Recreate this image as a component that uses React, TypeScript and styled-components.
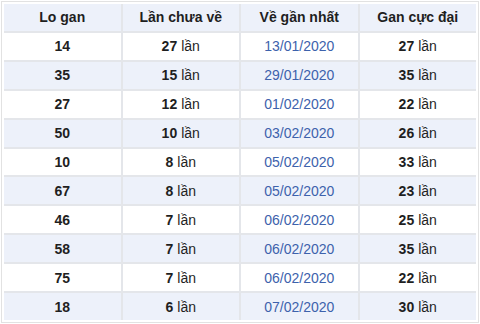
import React from "react";
import styled, { createGlobalStyle } from "styled-components";

const GlobalStyle = createGlobalStyle`
  html, body {
    margin: 0;
    padding: 0;
    background: #ffffff;
  }
  body {
    font-family: "Liberation Sans", Arial, sans-serif;
  }
`;

const Frame = styled.div`
  width: 478px;
  height: 322px;
  box-sizing: border-box;
  margin: 1px 0 0 1px;
  border: 1px solid #e2e2e2;
  padding: 2px;
`;

const Table = styled.div`
  display: grid;
  grid-template-columns: repeat(4, 1fr);
  grid-template-rows: repeat(11, 1fr);
  gap: 2px;
  height: 316px;
  background: #e4e6ea;
`;

const Cell = styled.div<{ $head?: boolean; $alt?: boolean }>`
  display: flex;
  align-items: center;
  justify-content: center;
  font-size: 14px;
  color: #1f1f1f;
  font-weight: ${(p) => (p.$head ? 700 : 400)};
  background: ${(p) => (p.$head || p.$alt ? "#edf1fa" : "#ffffff")};
`;

const Num = styled.b<{ $gap?: boolean }>`
  font-weight: 700;
  margin-right: ${(p) => (p.$gap ? "4px" : "0")};
`;

const DateText = styled.span`
  color: #3d62ac;
`;

type Row = { lo: string; chua: number; date: string; max: number };

const rows: Row[] = [
  { lo: "14", chua: 27, date: "13/01/2020", max: 27 },
  { lo: "35", chua: 15, date: "29/01/2020", max: 35 },
  { lo: "27", chua: 12, date: "01/02/2020", max: 22 },
  { lo: "50", chua: 10, date: "03/02/2020", max: 26 },
  { lo: "10", chua: 8, date: "05/02/2020", max: 33 },
  { lo: "67", chua: 8, date: "05/02/2020", max: 23 },
  { lo: "46", chua: 7, date: "06/02/2020", max: 25 },
  { lo: "58", chua: 7, date: "06/02/2020", max: 35 },
  { lo: "75", chua: 7, date: "06/02/2020", max: 22 },
  { lo: "18", chua: 6, date: "07/02/2020", max: 30 },
];

function App() {
  return (
    <>
      <GlobalStyle />
      <Frame>
        <Table>
          <Cell $head>Lo gan</Cell>
          <Cell $head>Lần chưa về</Cell>
          <Cell $head>Về gần nhất</Cell>
          <Cell $head>Gan cực đại</Cell>
          {rows.map((r, i) => (
            <React.Fragment key={i}>
              <Cell $alt={i % 2 === 1}>
                <Num>{r.lo}</Num>
              </Cell>
              <Cell $alt={i % 2 === 1}>
                <Num $gap>{r.chua}</Num>lần
              </Cell>
              <Cell $alt={i % 2 === 1}>
                <DateText>{r.date}</DateText>
              </Cell>
              <Cell $alt={i % 2 === 1}>
                <Num $gap>{r.max}</Num>lần
              </Cell>
            </React.Fragment>
          ))}
        </Table>
      </Frame>
    </>
  );
}

export default App;
